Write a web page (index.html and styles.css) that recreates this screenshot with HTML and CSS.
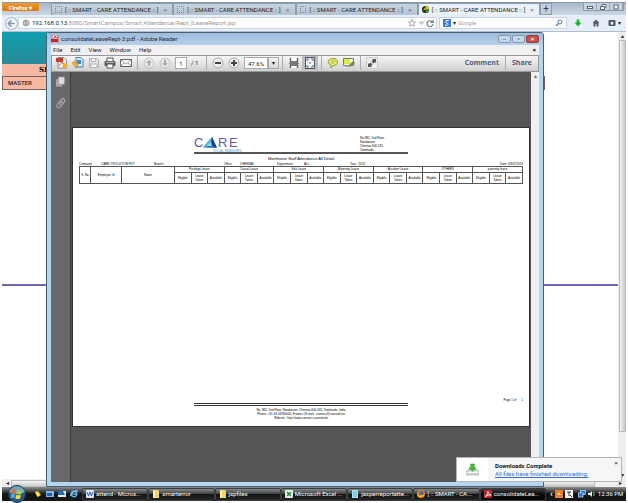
FILE: index.html
```html
<!DOCTYPE html>
<html lang="en">
<head>
<meta charset="utf-8">
<title>[ :: SMART - CARE ATTENDANCE :: ]</title>
<link rel="stylesheet" href="styles.css">
</head>
<body>
<div class="desktop">
  <header class="tabbar">
    <button class="firefox">Firefox ▾</button>
    <nav class="tabs">
      <div class="tab"><i class="blank"></i><a href="#">[ :: SMART - CARE ATTENDANCE :: ]</a><button class="x">×</button></div>
      <div class="tab"><i class="blank"></i><a href="#">[ :: SMART - CARE ATTENDANCE :: ]</a><button class="x">×</button></div>
      <div class="tab"><i class="blank"></i><a href="#">[ :: SMART - CARE ATTENDANCE :: ]</a><button class="x">×</button></div>
      <div class="tab active"><svg class="fav" viewBox="0 0 8 8"><circle cx="4" cy="4" r="4" fill="#222"/><path d="M4 4V0a4 4 0 0 1 4 4z" fill="#e8c020"/><path d="M4 4v4a4 4 0 0 0 4-4z" fill="#279a38"/><path d="M1 5l3-4v3z" fill="#f2d94a"/></svg><a href="#">[ :: SMART - CARE ATTENDANCE :: ]</a><button class="x">×</button></div>
    </nav>
    <button class="newtab">+</button>
    <div class="controls"><button aria-label="Minimize"><svg viewBox="0 0 8 6"><rect x="1.500" y="2.500" width="5" height="2"/></svg></button><button aria-label="Restore"><svg viewBox="0 0 8 6"><path d="M3 2V.5h4v3H5.500M1.500 2.500h4v3h-4z"/></svg></button><button aria-label="Close"><svg viewBox="0 0 8 6"><rect x="2" y="1" width="4" height="4"/></svg></button></div>
  </header>
  <div class="navbar">
    <button class="back" aria-label="Back"><svg viewBox="0 0 12 12"><circle cx="6" cy="6" r="5.500" fill="#f6f9fc" stroke="#a9b9c9"/><path d="M9 6H3.500M6 3L3 6l3 3" fill="none" stroke="#8197ab" stroke-width="1.400"/></svg></button>
    <div class="url">
      <svg class="ic8" viewBox="0 0 8 8"><g fill="none" stroke="#888" stroke-width=".8"><circle cx="4" cy="4" r="3"/><path d="M1 4h6M4 1v6M2 2q2 2 4 0M2 6q2-2 4 0"/></g></svg>
      <span class="address"><b>192.168.0.13</b>:8080/SmartCampus/Smart Attendance/Rept_lLeaveReport.jsp</span>
      <svg class="urlicons" viewBox="0 0 26 8"><g fill="none" stroke="#8d98a3" stroke-width=".8"><path d="M4 .5l1 2.500 2.500.2-2 1.600.7 2.500L4 6 1.800 7.300l.7-2.500L.5 3.200 3 3z"/><path d="M11.500 3h4l-2 2.500z"/><path d="M24.500 3A3 3 0 1 0 25 5M25.200.8v2.600h-2.600" stroke="#69747e" stroke-width="1.100"/></g></svg>
    </div>
    <form class="search"><svg class="ic8" viewBox="0 0 8 8"><rect width="8" height="8" fill="#3f7be0"/><path d="M5.800 1.500H4a1.300 1.300 0 1 0 .2 2.600q1 .5.700 1.300T3.500 6.600 2.300 5.500" fill="none" stroke="#fff"/></svg><span>▾</span><input aria-label="Search" placeholder="Google"><svg class="ic8" viewBox="0 0 8 8"><circle cx="5" cy="3" r="2" fill="none" stroke="#4d78b5"/><path d="M3.500 4.500L1 7" stroke="#4d78b5" stroke-width="1.300"/></svg></form>
    <button class="tool" aria-label="Downloads"><svg class="ic8" viewBox="0 0 8 8"><path d="M2.700.5h2.600v3H7.500L4 7.500.5 3.500h2.200z" fill="#1ab522"/></svg></button>
    <button class="tool" aria-label="Home"><svg class="ic8" viewBox="0 0 8 8"><path d="M4 .5L.5 4h1v3.500h2V5h1v2.500h2V4h1z" fill="#555f68"/></svg></button>
    <button class="tool wide" aria-label="Bookmarks"><svg class="ic8" viewBox="0 0 8 8"><rect x=".5" y="1" width="7" height="6" rx="1" fill="#4c5964"/><path d="M4 2l.6 1.400L6 3.600l-1 1 .2 1.300L4 5.200l-1.200.7.2-1.300-1-1 1.400-.2z" fill="#fff"/></svg><span>▾</span></button>
  </div>
  <main class="page">
    <section class="site">
      <div class="banner"></div>
      <div class="sitehead">SI</div>
      <div class="master">MASTER</div>
      <div class="rest"><hr></div>
    </section>
    <aside class="vscroll"><span>▴</span><div class="thumb"></div><span>▾</span></aside>
    <div class="hscroll"><span>◂</span><div class="hthumb"></div><span>▸</span></div>
  </main>

  <footer class="taskbar">
    <button class="start" aria-label="Start"><svg viewBox="0 0 20 18"><circle cx="10" cy="9" r="8.500" fill="#285c86" stroke="#16384f"/><path d="M2 7a8.500 8.500 0 0 1 16 0q-8 4-16 0" fill="#75a6bf"/><path d="M5 5q2-1.500 4.300-.3L8.500 8.500Q6.500 7.500 4.200 8.700z" fill="#ee6830"/><path d="M10.200 5q2 1.200 5 0l-1 4q-2.500 1-4.800-.2z" fill="#9fd144"/><path d="M4 9.500q2-1 4.300 0l-.8 3.700Q5.500 12 3.600 13.200z" fill="#54a8ee"/><path d="M9.200 9.800q2.300 1 4.700 0l-.8 3.800q-2.500 1-4.700 0z" fill="#fcd440"/></svg></button>
    <div class="quick">
      <svg viewBox="0 0 8 8"><path d="M1 2l3-1 3 4-3 2z" fill="#f4cf20"/><path d="M1 2l2 4 1 1V4z" fill="#fff37c"/></svg>
      <svg viewBox="0 0 8 8"><rect y="1" width="8" height="6" fill="#7fb5e8"/><path d="M1 3h5v3H1z" fill="#28609c"/></svg>
      <svg viewBox="0 0 8 8"><rect y="1" width="8" height="6" fill="#dcecff"/><path d="M0 1h5l2 4H0z" fill="#2d6aab"/></svg>
      <svg viewBox="0 0 8 8"><circle cx="4" cy="4" r="2.700" fill="none" stroke="#4db6f2" stroke-width="1.500"/><path d="M2 4h4.500M0 6Q3 0 8 1" fill="none" stroke="#9fdfff"/></svg>
    </div>
    <nav class="tasks">
      <button><svg viewBox="0 0 8 8"><rect width="8" height="8" rx="1" fill="#dce8fa"/><path d="M1 2l1.500 4L4 2l1.500 4L7 2" fill="none" stroke="#2a59a8"/></svg><span>attend - Micros...</span></button>
      <button><svg viewBox="0 0 8 8"><path d="M1 0h5l1 1v7H1z" fill="#f5d36b"/><path d="M1 0l2 1v7H1z" fill="#fff0a8"/></svg><span>smarterror</span></button>
      <button><svg viewBox="0 0 8 8"><path d="M1 0h5l1 1v7H1z" fill="#f5d36b"/><path d="M1 0l2 1v7H1z" fill="#fff0a8"/></svg><span>jspfiles</span></button>
      <button><svg viewBox="0 0 8 8"><rect width="8" height="8" rx="1" fill="#e5f7e3"/><path d="M2 2l4 4M6 2L2 6" stroke="#25883a" stroke-width="1.500"/></svg><span>Microsoft Excel ...</span></button>
      <button><svg viewBox="0 0 8 8"><rect x="1" width="6" height="8" fill="#a9e2f3"/><path d="M2 2h4M2 4h4M2 6h4" stroke="#4c9ebd" stroke-width=".7"/></svg><span>jasperreportatte...</span></button>
      <button><svg viewBox="0 0 8 8"><circle cx="4" cy="4" r="4" fill="#ee7a16"/><circle cx="4.500" cy="3.300" r="2.300" fill="#3c72ba"/><path d="M0 3q2 4 5 2l2-1q-1 4-4 3.500Q0 7 0 3" fill="#ffae25"/></svg><span>[ :: SMART - CA...</span></button>
      <button class="current"><svg viewBox="0 0 8 8"><rect width="8" height="8" rx="1" fill="#c3262b"/><path d="M1.500 6.500Q4 4 4 1.500 4.500 5 7 5 4 4.700 1.500 6.500z" fill="none" stroke="#fff" stroke-width=".8"/></svg><span>consolidateLea...</span></button>
    </nav>
    <div class="tray"><b>‹</b>
      <svg viewBox="0 0 8 8"><rect width="8" height="8" fill="#f27d20"/><path d="M2 5h4L4 2z" fill="#ffdda8"/></svg>
      <svg viewBox="0 0 8 8"><rect width="8" height="8" fill="#f5f5f5"/><path d="M2 2h4M4 2v4M5 5l2 2" stroke="#333"/></svg>
      <svg class="net" viewBox="0 0 8 8"><rect x="2.500" y=".5" width="5" height="4" fill="#2e72cf" stroke="#bce0ff" stroke-width=".7"/><rect x=".5" y="3" width="4.500" height="4" fill="#2e72cf" stroke="#bce0ff" stroke-width=".7"/></svg>
      <svg viewBox="0 0 8 8"><path d="M0 3h2l2-2v6L2 5H0z" fill="#eee"/><path d="M5.500 2q1.500 2 0 4" fill="none" stroke="#7acb55"/></svg>
      <time>12:36 PM</time></div>
  </footer>

  <section class="reader" aria-label="Adobe Reader">
    <div class="title"><svg class="ic8" viewBox="0 0 8 8"><path d="M1 0h5l1 1v7H1z" fill="#fff" stroke="#b66"/><path d="M0 4h7v3H0z" fill="#c9252b"/><path d="M1.500 4Q4 3 4 1q0 2 3 2" fill="none" stroke="#c9252b"/></svg><span>consolidateLeaveRept-3.pdf - Adobe Reader</span><div class="wincontrols"><button aria-label="Minimize reader">–</button><button aria-label="Maximize reader">▫</button><button class="close" aria-label="Close reader">×</button></div></div>
    <nav class="menu"><button>File</button><button>Edit</button><button>View</button><button>Window</button><button>Help</button><button class="docclose">×</button></nav>
    <div class="toolbar">
      <button aria-label="Create PDF"><svg viewBox="0 0 12 12"><path d="M2 .5h6l2.500 2.500v8H2z" fill="#fff" stroke="#888"/><path d="M0 1h7v4H0z" fill="#c93a30"/><path d="M3 9q3-3 2.500-5Q6 7 9 7" fill="none" stroke="#d34c42"/><circle cx="9" cy="8.500" r="2.500" fill="#f1b229"/></svg></button>
      <button aria-label="Open"><svg viewBox="0 0 12 12"><path d="M4 .5h5l2 2V10H4z" fill="#d9ebff" stroke="#467eb6"/><path d="M5 3h4v4H5z" fill="#4888c4"/><path d="M0 6l3-2v2h3v3H4v2z" fill="#efb831" stroke="#b98016" stroke-width=".5"/></svg></button>
      <button aria-label="Save"><svg viewBox="0 0 12 12"><path d="M1.500 1.500h8l1 1v8h-9z" fill="#e2e2e2" stroke="#b1b1b1"/><path d="M3.500 1.500h4v3h-4zM3 7h6v3.500H3z" fill="#f5f5f5" stroke="#b8b8b8"/></svg></button>
      <button aria-label="Print"><svg viewBox="0 0 12 12"><path d="M3 4V1h6v3" fill="#fff" stroke="#555"/><rect x=".5" y="4" width="11" height="5" rx="1" fill="#596068"/><path d="M3 7h6v4H3z" fill="#fff" stroke="#555"/><path d="M2 5.500h8" stroke="#b8bec3"/></svg></button>
      <button aria-label="Email"><svg viewBox="0 0 12 12"><path d="M.5 2.500h11v7H.5z" fill="#fafafa" stroke="#666"/><path d="M.5 2.500L6 7l5.500-4.500M.5 9.500L4 6M11.500 9.500L8 6" fill="none" stroke="#777" stroke-width=".7"/></svg></button>
      <i class="sep"></i>
      <button aria-label="Previous page"><svg viewBox="0 0 12 12"><circle cx="6" cy="6" r="5" fill="#e7e7e7" stroke="#c4c4c4"/><path d="M6 3l3 3H7v3H5V6H3z" fill="#aaa"/></svg></button>
      <button aria-label="Next page"><svg viewBox="0 0 12 12"><circle cx="6" cy="6" r="5" fill="#e7e7e7" stroke="#c4c4c4"/><path d="M6 9l3-3H7V3H5v3H3z" fill="#aaa"/></svg></button>
      <input class="num" aria-label="Page number" value="1"><span class="count">/ 1</span>
      <i class="sep"></i>
      <button aria-label="Zoom out"><svg viewBox="0 0 12 12"><circle cx="6" cy="6" r="5" fill="#eee" stroke="#aaa"/><path d="M3 6h6" stroke="#444" stroke-width="2"/></svg></button>
      <button aria-label="Zoom in"><svg viewBox="0 0 12 12"><circle cx="6" cy="6" r="5" fill="#eee" stroke="#aaa"/><path d="M3 6h6M6 3v6" stroke="#444" stroke-width="2"/></svg></button>
      <input class="zoom" aria-label="Zoom" value="47.6%"><button class="drop" aria-label="Zoom levels">▾</button>
      <i class="sep"></i>
      <button aria-label="Fit width"><svg viewBox="0 0 12 12"><path d="M2.500 1v4h7V1M2.500 11V8h7v3" fill="#fff" stroke="#555" stroke-width="1.300"/><path d="M1 6.500h10" stroke="#777"/></svg></button>
      <button class="pressed" aria-label="Fit page"><svg viewBox="0 0 12 12"><rect x="1.500" y=".5" width="9" height="11" fill="#eef4fb" stroke="#555"/><path d="M3 4V2h2M7 2h2v2M3 8v2h2M7 10h2V8" fill="none" stroke="#567"/><path d="M5 6h2M6 5v2" stroke="#89a"/></svg></button>
      <i class="sep"></i>
      <button aria-label="Sticky note"><svg viewBox="0 0 12 12"><path d="M6 1.500c6 0 6 7 0 7L4 11V8C-1 6 1 1.500 6 1.500z" fill="#edf276" stroke="#8b9630"/><path d="M3.500 4h5M3.500 6h4" stroke="#8b9630" stroke-width=".7"/></svg></button>
      <button aria-label="Highlight"><svg viewBox="0 0 12 12"><path d="M.5 1.500h10v7H5L3.500 10V8.500h-3z" fill="#f4f4f4" stroke="#777"/><path d="M1 2h6v5H1z" fill="#dced39"/><path d="M5 9l5-5 2 2-5 4z" fill="#7e8439"/></svg></button>
      <i class="sep"></i>
      <button aria-label="Full screen"><svg viewBox="0 0 12 12"><rect x=".5" y=".5" width="11" height="11" fill="#eee" stroke="#ccc"/><path d="M6 2h4v4L9 5 7.500 6.500l-2-2L7 3zM2 6l1 1 1.500-1.500 2 2L5 9l1 1H2z" fill="#555"/></svg></button>
      <div class="right"><button>Comment</button><button class="share">Share</button></div>
    </div>
    <div class="work">
      <aside class="side"><svg viewBox="0 0 12 12"><path d="M1 3h7v8H1z" fill="#aaa"/><path d="M3.500.5h7v8h-7z" fill="#ddd" stroke="#888" stroke-width=".7"/></svg><svg viewBox="0 0 12 12"><path d="M3 7l4-5q2-1.500 3 0t0 3L6 10q-2 2-3.500.5T3 7l4-3.500M5 8l3.500-4" fill="none" stroke="#aaa" stroke-width="1.200"/></svg></aside>
      <div class="canvas">
        <article class="sheet">
          <header class="letter">
            <svg class="logo" viewBox="0 0 48 16" role="img" aria-label="CARE"><text x="0" y="11">C</text><path d="M9 11.500L18 1l5 11z" fill="#2377b9"/><path d="M9 11.500L18 1l-1 8z" fill="#61b5df"/><path d="M18 1l5 11-6-3z" fill="#123f85"/><path d="M13 10l4-4 1 4z" fill="#9dd9f0"/><text x="24" y="11">R</text><text x="35" y="11">E</text><text class="sub" x="19" y="16">SOCIAL MEASURES</text></svg>
            <address>No 882, 2nd Floor,<br>Nandanam,<br>Chennai 600 035,<br>Tamilnadu.</address>
          </header>
          <h1>Monthwise Staff Attendance All Detail</h1>
          <div class="meta"><span>Company :</span><span>CARE ITSOLUTION PVT</span><span>Branch</span><span>Office :</span><span>CHENNAI</span><span>Department :</span><span>ALL</span><span>Year : 2012</span><span>Date: 03/07/2013</span></div>
          <table>
            <colgroup><col class="c1"><col class="c2"><col class="c3"></colgroup>
            <thead>
            <tr><th rowspan="2">S. No</th><th rowspan="2">Employee Id</th><th rowspan="2">Name</th><th colspan="3">Privilege Leave</th><th colspan="3">Casual Leave</th><th colspan="3">Sick Leave</th><th colspan="3">Maternity Leave</th><th colspan="3">Accident Leave</th><th colspan="3">OTHERS</th><th colspan="3">paternity leave</th></tr>
            <tr class="subs"><th>Eligible</th><th>Leave Taken</th><th>Available</th><th>Eligible</th><th>Leave Taken</th><th>Available</th><th>Eligible</th><th>Leave Taken</th><th>Available</th><th>Eligible</th><th>Leave Taken</th><th>Available</th><th>Eligible</th><th>Leave Taken</th><th>Available</th><th>Eligible</th><th>Leave Taken</th><th>Available</th><th>Eligible</th><th>Leave Taken</th><th>Available</th></tr>
            </thead>
          </table>
          <p class="pageno"><span>Page 1 of</span><span>1</span></p>
          <footer class="foot">No. 882, 2nd Floor, Nandanam, Chennai-600 035, Tamilnadu, India<br>Phone: +91 44 24330000, Frames | E-mail : connect@careind.net<br>Website : http://www.connect.careind.net</footer>
        </article>
      </div>
      <div class="docscroll">▴</div>
    </div>
  </section>

  <section class="toast">
    <div class="toasticon"><svg viewBox="0 0 14 14"><path d="M2 7h10l2 3v3H0v-3z" fill="#d4d4d4" stroke="#999" stroke-width=".6"/><path d="M1 10h12" stroke="#fff"/><path d="M5 1h4v4h2L7 9 3 5h2z" fill="#3fbd35" stroke="#238b22" stroke-width=".5"/></svg></div>
    <div class="toasttext"><strong>Downloads Complete</strong><a href="#">All files have finished downloading.</a></div>
    <button aria-label="Dismiss">×</button>
  </section>
</div>
</body>
</html>
```
FILE: styles.css
```css
* { box-sizing: border-box; }
body { margin: 0; background: #fff; font: 6px/8px Roboto, "Noto Sans", sans-serif; color: #222; }
button, input { font: inherit; color: inherit; border: 0; padding: 0; margin: 0; background: none; min-width: 0; }
a { color: inherit; text-decoration: none; }
svg { display: block; flex: none; }
.ic8 { width: 8px; height: 8px; }

.desktop { position: relative; display: flex; flex-direction: column; height: 100vh; padding: 2px; }

.tabbar { display: flex; height: 13px; background: linear-gradient(#a8b8c9, #cbd7e4); border-top: 1px solid #8797a8; }
.firefox { flex: none; width: 37px; height: 8px; background: linear-gradient(#ef9b2c, #dd7613); border-radius: 0 0 2px 2px; color: #fff; font-weight: 700; line-height: 7px; }
.tabs { flex: 1; display: flex; min-width: 0; margin-left: 12px; }
.tab { flex: 1; display: flex; align-items: center; gap: 3px; min-width: 0; padding: 0 3px; background: linear-gradient(#c8d4e0, #b5c3d2); border: 1px solid #8d9cac; border-bottom: 0; border-radius: 2px 2px 0 0; white-space: nowrap; }
.tab a { flex: 1; }
.tab.active { background: #e9f1fa; }
.blank { width: 7px; height: 7px; border: 1px dotted #7b8794; }
.fav { width: 7px; height: 7px; }
.x { width: 8px; color: #667; }
.newtab { flex: none; width: 12px; border: 1px solid #8d9cac; background: #c3cfdc; color: #444; font-size: 10px; }
.controls { flex: none; display: flex; height: 8px; margin: 0 2px 0 31px; background: #c5d1de; border: 1px solid #8b9aab; border-top: 0; }
.controls button { width: 13px; border-right: 1px solid #9ba8b6; }
.controls svg { width: 8px; height: 6px; margin: 0 auto; fill: #fff; stroke: #586472; stroke-width: 1; }

.navbar { display: flex; align-items: center; height: 17px; padding: 0 3px; background: #e6eff9; border-bottom: 1px solid #b2c0ce; }
.back { z-index: 1; width: 13px; height: 13px; }
.back svg { width: 13px; height: 13px; }
.url { flex: 1; display: flex; align-items: center; gap: 2px; height: 12px; padding: 0 2px 0 3px; background: #fff; border: 1px solid #cbd5df; }
.address { flex: 1; color: #999; white-space: nowrap; }
.address b { font-weight: 400; color: #222; }
.urlicons { width: 26px; height: 8px; }
.search { display: flex; align-items: center; gap: 2px; width: 128px; height: 12px; margin: 0 2px; padding: 0 3px; background: #fff; border: 1px solid #cbd5df; }
.search input { flex: 1; outline: 0; font-style: italic; }
.search input::placeholder { color: #999; opacity: 1; }
.tool { display: flex; justify-content: center; width: 18px; }
.wide { gap: 2px; }

.page { flex: 1; display: grid; grid-template: 1fr 8px / 1fr 8px; background: #fff; }
.site { display: flex; flex-direction: column; width: 100%; }
.banner { height: 32px; margin-right: 76px; background: linear-gradient(#0fa0ae, #2b8998); }
.sitehead { height: 12px; margin-right: 76px; padding-left: 37px; background: #f8b9a4; color: #000; font: 700 7px/12px "DejaVu Serif", serif; }
.master { height: 14px; margin-right: 73px; padding-left: 5px; border: 1px solid #74605b; background: #f8b9a4; line-height: 12px; font-weight: 500; }
.rest { flex: 1; padding-top: 194px; }
.rest hr { height: 2px; margin: 0; border: 0; background: #6e66b4; }
.vscroll { display: flex; flex-direction: column; justify-content: space-between; align-items: center; background: #eee; }
.thumb { flex: 1; width: 7px; max-height: 392px; margin-bottom: auto; background: linear-gradient(90deg, #f3f3f3, #c8c8c8); border: 1px solid #bbb; }
.hscroll { grid-column: 1 / 3; display: flex; align-items: center; background: #eee; padding: 0 4px; }
.hthumb { flex: 1; height: 7px; margin: 0 24px 0 2px; border: 1px solid #bbb; background: linear-gradient(#f5f5f5, #ccc); }

.taskbar { display: flex; align-items: center; height: 14px; background: linear-gradient(#8b8d8d, #45484a 30%, #111 50%, #181818); color: #fff; }
.start { width: 30px; height: 18px; }
.start svg { width: 20px; height: 18px; margin: 0 auto; }
.quick { display: flex; gap: 4px; width: 50px; padding-left: 2px; }
.quick svg { width: 8px; height: 8px; }
.tasks { flex: 1; display: flex; min-width: 0; height: 13px; }
.tasks button { flex: 1; display: flex; align-items: center; gap: 2px; padding-left: 3px; border: 1px solid #3b3d3f; border-radius: 2px; white-space: nowrap; background: linear-gradient(#85888a, #3d3f40 45%, #141414 50%, #252525); }
.tasks .current { background: linear-gradient(#3c3c3c, #080808 50%); }
.tasks svg, .tray svg { width: 8px; height: 8px; }
.tray { display: flex; align-items: center; gap: 2px; width: 80px; padding-left: 4px; white-space: nowrap; }
.tray .net { margin-left: 3px; }
.tray b { font-size: 9px; }

.reader { position: absolute; left: 46px; right: 84px; top: 32px; bottom: 16px; display: flex; flex-direction: column; padding: 0 4px 4px; background: #b5d6ef; border: 1px solid #47616f; border-radius: 3px 3px 0 0; }
.title { display: flex; align-items: center; gap: 2px; height: 13px; margin: 0 -4px; padding-left: 4px; background: linear-gradient(#9dbbdc, #b9d0e9); color: #1c2734; white-space: nowrap; }
.wincontrols { display: flex; gap: 1px; margin: 0 4px 0 auto; }
.wincontrols button { width: 13px; height: 8px; border: 1px solid #8398b0; border-radius: 2px; background: #c5d7ea; line-height: 6px; }
.wincontrols .close { background: #c9504a; border-color: #903d3d; color: #fff; font-weight: 700; }
.menu { display: flex; gap: 8px; height: 10px; padding: 0 2px; background: #f0f0f2; }
.docclose { margin-left: auto; font-weight: 700; color: #000; padding-right: 1px; }
.toolbar { display: flex; align-items: center; height: 18px; padding-left: 2px; background: linear-gradient(#f7f7f7, #d0d0d0); border: 1px solid #999; }
.toolbar button { width: 16px; }
.toolbar svg { width: 12px; height: 12px; margin: 0 auto; }
.toolbar .pressed { height: 14px; padding: 1px 0; background: #b9bec4; }
.sep { width: 1px; height: 14px; margin: 0 3px; background: #aaa; }
.toolbar input { height: 12px; border: 1px solid #aaa; background: #fff; text-align: center; }
.toolbar .num { width: 12px; margin: 0 4px 0 2px; }
.count { width: 12px; }
.toolbar .zoom { width: 24px; margin-left: 2px; }
.toolbar .drop { width: 11px; height: 12px; border: 1px solid #aaa; }
.right { display: flex; margin-left: auto; font: 700 7px/14px "Open Sans", sans-serif; color: #4d5d78; }
.toolbar .right button { width: auto; padding: 0 6px; }
.toolbar .right .share { border-left: 1px solid #aaa; }
.work { flex: 1; display: grid; grid-template-columns: 20px 1fr 8px; background: #555; }
.side { display: flex; flex-direction: column; align-items: center; gap: 9px; padding-top: 4px; background: #686868; border-right: 1px solid #3b3b3b; }
.side svg { width: 11px; height: 12px; }
.docscroll { background: #f0f0f0; text-align: center; color: #666; }
.canvas { padding: 55px 1px; }
.sheet { display: flex; flex-direction: column; height: 300px; padding: 8px 6px 6px; background: #fff; border: 1px solid #333; font: 3px/4px "Liberation Sans", Arial, sans-serif; color: #000; }
.letter { display: flex; justify-content: space-between; height: 18px; margin: 0 115px; border-bottom: 2px solid #555; }
.logo { width: 48px; height: 16px; }
.logo text { font: 13px "Liberation Sans", sans-serif; fill: #61569f; }
.logo .sub { font-size: 3px; fill: #569acb; }
.letter address { width: 48px; font-style: normal; white-space: nowrap; }
.sheet h1 { margin: 2px 0 1px; font: 4px/5px "Liberation Sans", sans-serif; text-align: center; }
.meta { display: grid; grid-template-columns: 22px 53px 70px 16px 37px 27px 46px 1fr auto; height: 4px; white-space: nowrap; }
table { width: 100%; table-layout: fixed; border-collapse: collapse; }
th { height: 6px; padding: 0; border: 1px solid #555; font-weight: 400; overflow-wrap: normal; }
.subs th { height: 11px; }
.c1 { width: 11px; }
.c2 { width: 31px; }
.c3 { width: 53px; }
.pageno { display: flex; justify-content: flex-end; gap: 5px; margin: auto 0 1px; }
.foot { margin: 0 115px; padding-top: 2px; border-top: 3px double #333; text-align: center; white-space: nowrap; }

.toast { position: absolute; right: 6px; bottom: 21px; display: flex; width: 166px; height: 25px; background: #f5f6f8; border: 1px solid #b5b5b5; }
.toasticon { display: grid; place-items: center; width: 31px; background: #fff; }
.toasticon svg { width: 13px; height: 13px; }
.toasttext { flex: 1; display: flex; flex-direction: column; padding: 4px 0 0 7px; white-space: nowrap; }
.toasttext strong { color: #111; }
.toasttext a { color: #346ec9; text-decoration: underline; }
.toast > button { align-self: flex-start; width: 10px; height: 10px; }
```
